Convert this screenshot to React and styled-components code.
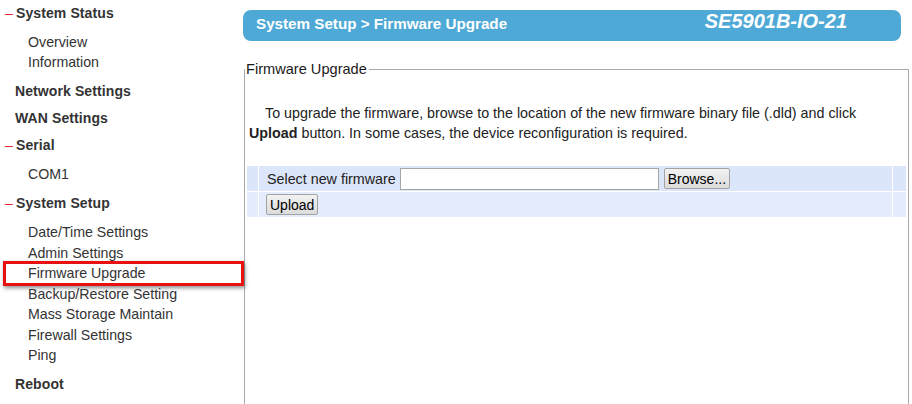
import styled, { createGlobalStyle } from 'styled-components'

const GlobalStyle = createGlobalStyle`
	html, body {
		margin: 0;
		padding: 0;
		background: #fff;
		font-family: "Liberation Sans", Arial, sans-serif;
		font-size: 14px;
	}
`;

const Page = styled.div`
	display: flex;
	width: 912px;
	height: 404px;
	overflow: hidden;
`;

const Sidebar = styled.nav`
	width: 243px;
	flex: none;
	margin-top: -0.5px;
	color: #333;
`;

const Heading = styled.div`
	padding-left: 15px;
	line-height: 27px;
	font-weight: bold;
	letter-spacing: 0.1px;
`;

const Dash = styled.span`
	display: inline-block;
	width: 11px;
	margin-left: -10px;
	color: #e8262a;
	font-weight: normal;
`;

const SubMenu = styled.div`
	padding: 5.25px 0;
`;

const Item = styled.div`
	position: relative;
	padding-left: 28px;
	line-height: 20.5px;
	font-size: 14.2px;
	color: #333;

	${(p) => p.$active && `
		&::after {
			content: "";
			position: absolute;
			left: 3px;
			right: -1px;
			top: -2.5px;
			bottom: -2.5px;
			border: 3px solid #e81010;
			box-shadow: 1px 2px 4px rgba(0, 0, 0, 0.45);
		}
	`}
`;

const Main = styled.div`
	flex: 1;
	min-width: 0;
`;

const TitleBar = styled.div`
	width: 658px;
	height: 31px;
	margin-top: 10px;
	padding: 0 54px 0 13px;
	box-sizing: border-box;
	background: #4fa9d6;
	border-radius: 8px;
	display: flex;
	align-items: flex-start;
	justify-content: space-between;
	color: #fff;
`;

const Crumb = styled.div`
	font-size: 15.2px;
	font-weight: bold;
	margin-top: 5px;
`;

const Model = styled.div`
	font-size: 20px;
	font-weight: bold;
	font-style: italic;
	margin-top: 0;
`;

const Frame = styled.fieldset`
	width: 665px;
	height: 420px;
	box-sizing: border-box;
	margin: 20px 0 0 1px;
	padding: 0;
	border: 1px solid #a9a9a9;
	color: #222;
`;

const Legend = styled.legend`
	padding: 0 2px 0 1px;
	margin-left: 0;
	line-height: 16px;
	font-size: 14.6px;
	color: #1a1a1a;
`;

const Intro = styled.p`
	margin: 26px 0 22px;
	padding: 0 24px 0 4px;
	line-height: 20px;
	font-size: 14.3px;
	text-indent: 16px;
`;

const FormTable = styled.table`
	width: calc(100% - 2px);
	margin: 0 1px;
	border-collapse: separate;
	border-spacing: 1px;
`;

const Cell = styled.td`
	height: 25px;
	padding: 0;
	background: ${(p) => (p.$alt ? '#e5edfc' : '#dce6fa')};
	width: ${(p) => p.$w || 'auto'};
	vertical-align: middle;
`;

const Field = styled.div`
	display: flex;
	align-items: center;
	gap: ${(p) => p.$gap || '4px'};
	padding-left: ${(p) => p.$pl || '8px'};
	font-size: 14.3px;
	white-space: nowrap;
`;

const FileInput = styled.span`
	display: block;
	width: 259px;
	height: 22px;
	margin-right: 1px;
	box-sizing: border-box;
	background: #fff;
	border: 1px solid #a6a6a6;
`;

const Button = styled.button`
	padding: 0 3px;
	height: 21px;
	font-family: "Liberation Sans", Arial, sans-serif;
	font-size: 14px;
	color: #000;
	background: linear-gradient(#f2f2f2, #dcdcdc);
	border: 1px solid #a3a3a3;
	border-radius: 2px;
`;

const menu = [
	{ title: 'System Status', dash: true, items: ['Overview', 'Information'] },
	{ title: 'Network Settings' },
	{ title: 'WAN Settings' },
	{ title: 'Serial', dash: true, items: ['COM1'] },
	{
		title: 'System Setup',
		dash: true,
		items: [
			'Date/Time Settings',
			'Admin Settings',
			'Firmware Upgrade',
			'Backup/Restore Setting',
			'Mass Storage Maintain',
			'Firewall Settings',
			'Ping',
		],
	},
	{ title: 'Reboot' },
];

const App = () => {
	return (
		<>
			<GlobalStyle />
			<Page>
				<Sidebar>
					{menu.map((group) => (
						<div key={group.title}>
							<Heading>
								{group.dash && <Dash>–</Dash>}
								{group.title}
							</Heading>
							{group.items && (
								<SubMenu>
									{group.items.map((item) => (
										<Item key={item} $active={item === 'Firmware Upgrade'}>
											{item}
										</Item>
									))}
								</SubMenu>
							)}
						</div>
					))}
				</Sidebar>

				<Main>
					<TitleBar>
						<Crumb>System Setup &gt; Firmware Upgrade</Crumb>
						<Model>SE5901B-IO-21</Model>
					</TitleBar>

					<Frame>
						<Legend>Firmware Upgrade</Legend>
						<Intro>
							To upgrade the firmware, browse to the location of the new firmware binary file (.dld) and click{' '}
							<b>Upload</b> button. In some cases, the device reconfiguration is required.
						</Intro>
						<FormTable>
							<tbody>
								<tr>
									<Cell $w="11px" />
									<Cell>
										<Field>
											<span>Select new firmware</span>
											<FileInput />
											<Button>Browse...</Button>
										</Field>
									</Cell>
									<Cell $w="13px" />
								</tr>
								<tr>
									<Cell $alt $w="11px" />
									<Cell $alt>
										<Field $pl="7px">
											<Button>Upload</Button>
										</Field>
									</Cell>
									<Cell $alt $w="13px" />
								</tr>
							</tbody>
						</FormTable>
					</Frame>
				</Main>
			</Page>
		</>
	)
}

export default App
